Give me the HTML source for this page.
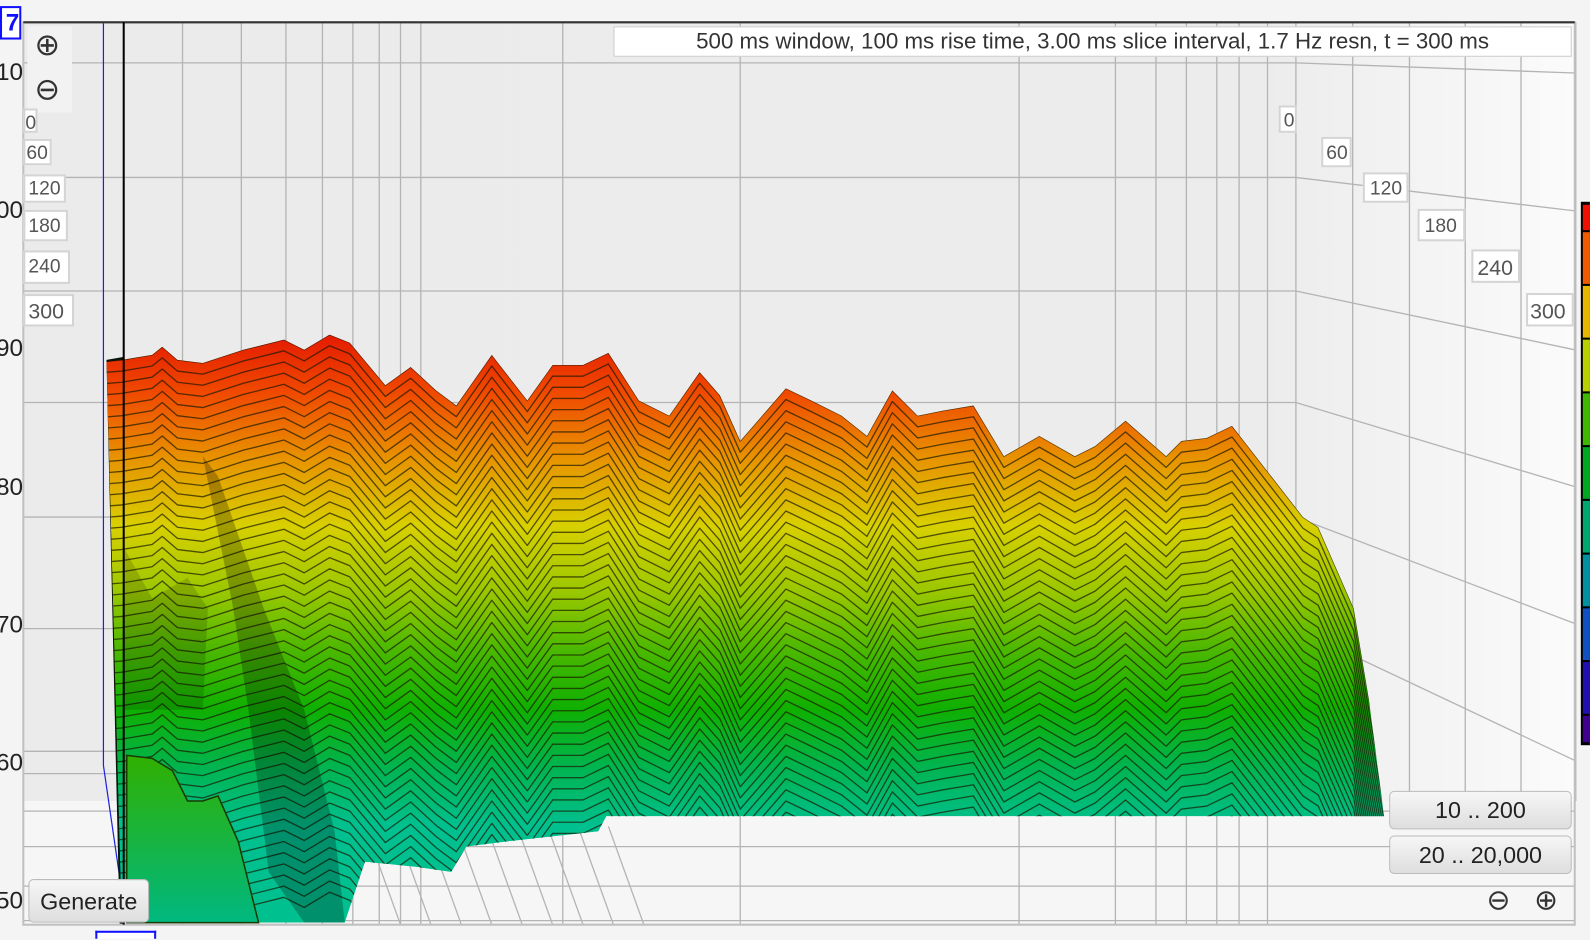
<!DOCTYPE html>
<html><head><meta charset="utf-8"><style>
html,body{margin:0;padding:0;background:#f4f4f4;overflow:hidden;width:1590px;height:940px}
#o{position:fixed;left:0;top:0;width:1590px;height:940px;overflow:hidden}
#w{position:absolute;left:0;top:0;width:1568px;height:926px;transform:scale(1.0140,1.0139);transform-origin:0 0;font-family:"Liberation Sans",sans-serif;overflow:hidden}
.a{position:absolute}
.lb{position:absolute;background:#fff;border:2px solid #d4d4d4;box-sizing:border-box;color:#555;font-size:19px;line-height:1;padding:3px 2px 0 3px;overflow:hidden}
.yl{position:absolute;left:-4px;font-size:24px;color:#222}
.btn{position:absolute;background:linear-gradient(#f6f6f6,#dedede);border:1px solid #bbb;border-radius:5px;font-size:23px;color:#222;text-align:center;box-sizing:border-box}
</style></head><body><div id="o"><div id="w">
<svg class="a" style="left:0;top:0" width="1568" height="926" viewBox="0 0 1568 926">
<defs>
<linearGradient id="bg" x1="0" x2="1" y1="0" y2="0">
<stop offset="0" stop-color="#ebebeb"/><stop offset="0.8" stop-color="#ececec"/><stop offset="1" stop-color="#fbfbfb"/></linearGradient>
<linearGradient id="sf" gradientUnits="userSpaceOnUse" x1="0" y1="330" x2="0" y2="815">
<stop offset="0" stop-color="#e41a00"/><stop offset="0.12" stop-color="#f04a00"/><stop offset="0.25" stop-color="#e89200"/>
<stop offset="0.39" stop-color="#d8d000"/><stop offset="0.52" stop-color="#9cc800"/><stop offset="0.64" stop-color="#4cb800"/>
<stop offset="0.76" stop-color="#10b000"/><stop offset="0.88" stop-color="#00b450"/><stop offset="1" stop-color="#00c090"/></linearGradient>
<linearGradient id="fg" x1="0" y1="0" x2="0" y2="1"><stop offset="0" stop-color="#30b000"/><stop offset="1" stop-color="#00b880"/></linearGradient>
<clipPath id="cp"><path id="surf" d="M105,357 L120,355 L150,350 L160,342 L175,355 L200,358 L240,345 L280,335 L300,345 L325,330 L345,338 L380,380 L405,362 L430,385 L450,400 L485,350 L520,395 L545,360 L575,360 L600,348 L630,395 L660,410 L690,367 L710,390 L730,435 L775,383 L800,395 L830,410 L855,430 L880,385 L905,410 L930,405 L960,400 L990,450 L1025,430 L1060,450 L1080,440 L1110,415 L1150,450 L1165,435 L1190,432 L1215,420 L1250,465 L1285,510 L1300,520 L1335,600 L1350,690 L1365,805 L598,805 L590,820 L500,830 L460,835 L445,860 L410,855 L360,850 L340,910 L255,910 L250,890 L120,910 Z"/></clipPath>
<path id="rg" d="M95,357 L120,355 L150,350 L160,342 L175,355 L200,358 L240,345 L280,335 L300,345 L325,330 L345,338 L380,380 L405,362 L430,385 L450,400 L485,350 L520,395 L545,360 L575,360 L600,348 L630,395 L660,410 L690,367 L710,390 L730,435 L775,383 L800,395 L830,410 L855,430 L880,385 L905,410 L930,405 L960,400 L990,450 L1025,430 L1060,450 L1080,440 L1110,415 L1150,450 L1165,435 L1190,432 L1215,420 L1250,465 L1285,510 L1300,520 L1335,600 L1350,690 L1370,805" fill="none" stroke="#1a1a00" stroke-opacity="0.7" stroke-width="1.3" stroke-linejoin="round"/>
</defs>
<rect x="23" y="22" width="1530" height="890" fill="url(#bg)"/>
<rect x="23" y="790" width="1530" height="122" fill="#f6f6f6"/>
<g stroke="#b4b4b4" stroke-width="1.3" fill="none">
<path d="M23,62H1278M23,175H1278M23,287H1278M23,397H1278M23,510H1278M23,620H1278M23,741H1278M23,763H120M23,800H1553M23,835H1553M23,874H1553M23,908H1553"/>
<path d="M180,22V912M238,22V912M282,22V912M318,22V912M348,22V912M374,22V912M395,22V912M415,22V912M555,22V912M730,22V912M1005,22V912M1100,22V912M1140,22V912M1170,22V912M1200,22V912M1222,22V912M1250,22V912M1278,22V790M1334,22V790M1390,22V790M1445,22V790M1500,22V790M1554,22V790"/>
<path d="M1278,62L1553,72M1278,175L1553,208M1278,287L1553,345M1278,397L1553,480M1278,510L1553,615M1278,620L1553,750"/>
<path d="M360,815L395,912M390,815L425,912M420,815L455,912M450,815L485,912M480,815L515,912M510,815L545,912M540,815L575,912M570,815L605,912M600,815L635,912"/>
</g>
<path d="M102,22V755L118,865" stroke="#2020e0" stroke-width="1.2" fill="none"/>
<path d="M105,355L122,352V912H118Z" fill="#0a1408"/>
<g clip-path="url(#cp)">
<use href="#surf" fill="url(#sf)"/>
<g>
<use href="#rg" transform="translate(0,0)"/><use href="#rg" transform="translate(0,11)"/><use href="#rg" transform="translate(0,22)"/><use href="#rg" transform="translate(0,33)"/><use href="#rg" transform="translate(0,44)"/><use href="#rg" transform="translate(0,55)"/><use href="#rg" transform="translate(0,66)"/><use href="#rg" transform="translate(0,77)"/><use href="#rg" transform="translate(0,88)"/><use href="#rg" transform="translate(0,99)"/><use href="#rg" transform="translate(0,110)"/><use href="#rg" transform="translate(0,121)"/><use href="#rg" transform="translate(0,132)"/><use href="#rg" transform="translate(0,143)"/><use href="#rg" transform="translate(0,154)"/><use href="#rg" transform="translate(0,165)"/><use href="#rg" transform="translate(0,176)"/><use href="#rg" transform="translate(0,187)"/><use href="#rg" transform="translate(0,198)"/><use href="#rg" transform="translate(0,209)"/><use href="#rg" transform="translate(0,220)"/><use href="#rg" transform="translate(0,231)"/><use href="#rg" transform="translate(0,242)"/><use href="#rg" transform="translate(0,253)"/><use href="#rg" transform="translate(0,264)"/><use href="#rg" transform="translate(0,275)"/><use href="#rg" transform="translate(0,286)"/><use href="#rg" transform="translate(0,297)"/><use href="#rg" transform="translate(0,308)"/><use href="#rg" transform="translate(0,319)"/><use href="#rg" transform="translate(0,330)"/><use href="#rg" transform="translate(0,341)"/><use href="#rg" transform="translate(0,352)"/><use href="#rg" transform="translate(0,363)"/><use href="#rg" transform="translate(0,374)"/><use href="#rg" transform="translate(0,385)"/><use href="#rg" transform="translate(0,396)"/><use href="#rg" transform="translate(0,407)"/><use href="#rg" transform="translate(0,418)"/><use href="#rg" transform="translate(0,429)"/><use href="#rg" transform="translate(0,440)"/><use href="#rg" transform="translate(0,451)"/><use href="#rg" transform="translate(0,462)"/><use href="#rg" transform="translate(0,473)"/><use href="#rg" transform="translate(0,484)"/><use href="#rg" transform="translate(0,495)"/><use href="#rg" transform="translate(0,506)"/><use href="#rg" transform="translate(0,517)"/><use href="#rg" transform="translate(0,528)"/><use href="#rg" transform="translate(0,539)"/><use href="#rg" transform="translate(0,550)"/>
</g>
<path d="M200,450 L230,600 L245,700 L265,860 L300,910 L340,910 L330,820 L300,700 L260,600 L215,470Z" fill="#000" opacity="0.25"/>
<path d="M122,540 L150,590 L185,570 L205,600 L200,700 L122,700Z" fill="#000" opacity="0.15"/>
</g>
<path d="M125,745 L150,748 L170,760 L185,790 L200,790 L215,785 L235,830 L255,910 L125,910Z" fill="url(#fg)" stroke="#1a3a00" stroke-width="1.5"/>
<path d="M23,22H1553V912H23Z" fill="none" stroke="#c0c0c0" stroke-width="2"/>
<path d="M23,22H1553" stroke="#333" stroke-width="2"/>
<path d="M122,22V912" stroke="#000" stroke-width="2"/>
<g>
<rect x="1559" y="199" width="9" height="536" fill="#000"/>
<rect x="1561" y="202" width="7" height="25" fill="#f01000"/>
<rect x="1561" y="229" width="7" height="51" fill="#f05a00"/>
<rect x="1561" y="282" width="7" height="51" fill="#e8b800"/>
<rect x="1561" y="335" width="7" height="51" fill="#b8d000"/>
<rect x="1561" y="388" width="7" height="51" fill="#40b800"/>
<rect x="1561" y="441" width="7" height="51" fill="#00a820"/>
<rect x="1561" y="494" width="7" height="51" fill="#00a870"/>
<rect x="1561" y="547" width="7" height="51" fill="#0090a0"/>
<rect x="1561" y="600" width="7" height="51" fill="#1050c0"/>
<rect x="1561" y="653" width="7" height="51" fill="#2010b0"/>
<rect x="1561" y="706" width="7" height="26" fill="#400090"/>
</g>
</svg>
<div class="a" style="left:0;top:6px;width:17px;height:29px;border:2px solid #1010ff;background:#fff;color:#1010ff;font-size:24px;font-weight:bold;line-height:29px;text-align:right;overflow:hidden">7</div>
<div class="a" style="left:94px;top:918px;width:56px;height:6px;border:2px solid #1010ff;border-bottom:none;background:#fff"></div>
<div class="a" style="left:27px;top:26px;width:44px;height:85px;background:#f2f2f2"></div>
<div class="a" style="left:34px;top:27px;font-size:30px;color:#333">⊕</div>
<div class="a" style="left:34px;top:71px;font-size:30px;color:#333">⊖</div>
<div class="yl" style="top:58px">10</div>
<div class="yl" style="top:194px">00</div>
<div class="yl" style="top:330px">90</div>
<div class="yl" style="top:467px">80</div>
<div class="yl" style="top:603px">70</div>
<div class="yl" style="top:739px">60</div>
<div class="yl" style="top:875px">50</div>
<div class="lb" style="left:23px;top:107px;width:14px;height:24px;padding-left:0">0</div>
<div class="lb" style="left:23px;top:137px;width:28px;height:26px;padding-left:1px">60</div>
<div class="lb" style="left:23px;top:172px;width:42px;height:28px">120</div>
<div class="lb" style="left:23px;top:207px;width:44px;height:31px;padding-top:5px">180</div>
<div class="lb" style="left:23px;top:247px;width:46px;height:33px;padding-top:5px">240</div>
<div class="lb" style="left:23px;top:290px;width:50px;height:32px;padding-top:5px;font-size:21px">300</div>
<div class="lb" style="left:1261px;top:104px;width:18px;height:27px;padding-top:4px">0</div>
<div class="lb" style="left:1303px;top:135px;width:30px;height:30px;padding-top:5px">60</div>
<div class="lb" style="left:1344px;top:170px;width:45px;height:30px;padding-top:5px;padding-left:5px">120</div>
<div class="lb" style="left:1398px;top:206px;width:47px;height:32px;padding-top:6px;padding-left:5px">180</div>
<div class="lb" style="left:1451px;top:246px;width:48px;height:33px;padding-top:6px;padding-left:4px;font-size:21px">240</div>
<div class="lb" style="left:1505px;top:289px;width:47px;height:33px;padding-top:6px;padding-left:2px;font-size:21px">300</div>
<div class="a" style="left:605px;top:26px;width:945px;height:30px;background:#fff;border:1px solid #ccc;box-sizing:border-box;font-size:22px;line-height:28px;color:#333;text-align:center;white-space:nowrap">500 ms window, 100 ms rise time, 3.00 ms slice interval, 1.7 Hz resn, t = 300 ms</div>
<div class="btn" style="left:1370px;top:780px;width:180px;height:38px;line-height:37px">10 .. 200</div>
<div class="btn" style="left:1370px;top:824px;width:180px;height:38px;line-height:37px">20 .. 20,000</div>
<div class="a" style="left:1466px;top:871px;font-size:28px;color:#333">⊖</div>
<div class="a" style="left:1513px;top:871px;font-size:28px;color:#333">⊕</div>
<div class="btn" style="left:28px;top:867px;width:119px;height:43px;line-height:42px">Generate</div>
</div></div></body></html>
